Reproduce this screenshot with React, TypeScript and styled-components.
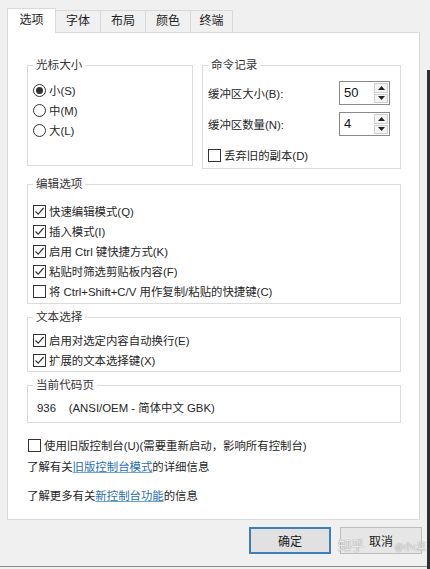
import React from "react";
import styled, { createGlobalStyle } from "styled-components";

const GlobalStyle = createGlobalStyle`
  html, body {
    margin: 0;
    padding: 0;
    background: #f0f0f0;
  }
  body {
    font-family: "Liberation Sans", "Noto Sans CJK SC", sans-serif;
    font-size: 11.4px;
    color: #262626;
  }
  * {
    box-sizing: border-box;
  }
`;

const Window = styled.div`
  position: relative;
  width: 430px;
  height: 569px;
  padding: 8px 9px 0 7px;
  display: flex;
  flex-direction: column;
  background: #f0f0f0;
  overflow: hidden;

  &::after {
    content: "";
    position: absolute;
    top: 70px;
    right: 0;
    bottom: 0;
    width: 3px;
    background: #2e2e2e;
  }

  &::before {
    content: "";
    position: absolute;
    left: 0;
    right: 0;
    bottom: 2px;
    height: 1px;
    background: #8c8c8c;
  }
`;

const TabStrip = styled.div`
  display: flex;
  align-items: flex-start;
  height: 24px;
  padding-left: 1px;
`;

const Tab = styled.div<{ $active?: boolean; $w: number }>`
  width: ${(p) => p.$w}px;
  margin-left: -1px;
  margin-top: ${(p) => (p.$active ? 0 : 2)}px;
  height: ${(p) => (p.$active ? 25 : 22)}px;
  padding-top: ${(p) => (p.$active ? 3 : 2)}px;
  border: 1px solid #d9d9d9;
  border-bottom: none;
  background: ${(p) => (p.$active ? "#ffffff" : "#f0f0f0")};
  position: relative;
  z-index: ${(p) => (p.$active ? 2 : 1)};
  text-align: center;
  line-height: 16px;
  font-size: 12px;
  color: #222;
`;

const Panel = styled.div`
  width: 413px;
  height: 488px;
  background: #ffffff;
  border: 1px solid #d9d9d9;
  padding: 25px 0 0 19px;
  display: flex;
  flex-direction: column;
`;

const TopRow = styled.div`
  display: flex;
  align-items: flex-start;
  gap: 9px;
`;

const Group = styled.fieldset<{ $w: number; $pt: number; $pb: number; $mt?: number }>`
  width: ${(p) => p.$w}px;
  margin: ${(p) => p.$mt ?? 0}px 0 0 0;
  padding: ${(p) => p.$pt}px 5px ${(p) => p.$pb}px 5px;
  border: 1px solid #dcdcdc;
  min-width: 0;
`;

const Legend = styled.legend`
  padding: 0 3px;
  line-height: 14px;
  font-size: 11.6px;
  color: #333;
`;

const OptionRow = styled.div`
  display: flex;
  align-items: center;
  gap: 3px;
  height: 20px;
  white-space: nowrap;
`;

const RadioCircle = styled.span<{ $checked?: boolean }>`
  width: 13px;
  height: 13px;
  border: 1px solid #333;
  border-radius: 50%;
  display: flex;
  align-items: center;
  justify-content: center;
  background: #fff;
  flex-shrink: 0;

  &::after {
    content: "";
    width: 7px;
    height: 7px;
    border-radius: 50%;
    background: ${(p) => (p.$checked ? "#333" : "transparent")};
  }
`;

const CheckBox = styled.span`
  width: 13px;
  height: 13px;
  border: 1px solid #333;
  background: #fff;
  display: flex;
  align-items: center;
  justify-content: center;
  flex-shrink: 0;
`;

const SpinRow = styled.div<{ $mt?: number }>`
  display: flex;
  align-items: center;
  justify-content: space-between;
  height: 24px;
  margin-top: ${(p) => p.$mt ?? 0}px;
  padding-right: 5px;
`;

const SpinBox = styled.div`
  width: 51px;
  height: 24px;
  border: 1px solid #8a8a8a;
  display: flex;
  background: #fff;
`;

const SpinValue = styled.div`
  flex: 1;
  padding-left: 4px;
  line-height: 22px;
  font-size: 13px;
  color: #111;
`;

const SpinButtons = styled.div`
  width: 15px;
  display: flex;
  flex-direction: column;
  gap: 1px;
  padding: 1px 1px 1px 0;
`;

const SpinButton = styled.div`
  flex: 1;
  border: 1px solid #cfcfcf;
  background: #f3f3f3;
  display: flex;
  align-items: center;
  justify-content: center;
`;

const Spacer = styled.div<{ $h: number }>`
  height: ${(p) => p.$h}px;
`;

const CodePage = styled.div`
  height: 20px;
  line-height: 20px;
  padding-left: 4px;
  white-space: nowrap;
`;

const LegacyRow = styled(OptionRow)`
  margin-top: 12px;
  margin-left: 1px;
`;

const InfoLine = styled.div<{ $mt: number }>`
  height: 20px;
  line-height: 20px;
  margin-top: ${(p) => p.$mt}px;
  white-space: nowrap;
`;

const InfoLink = styled.a`
  color: #1f6fb5;
  text-decoration: underline;
  text-decoration-color: #6aa7d8;
  cursor: pointer;
`;

const Footer = styled.div`
  display: flex;
  justify-content: flex-end;
  gap: 9px;
  margin-top: 7px;
  margin-right: -1px;
`;

const DialogButton = styled.button<{ $default?: boolean }>`
  width: 82px;
  height: 27px;
  font-family: "Noto Sans CJK SC", sans-serif;
  font-size: 12px;
  color: #1a1a1a;
  background: ${(p) => (p.$default ? "#e1e1e1" : "#e6e6e6")};
  border: ${(p) => (p.$default ? "2px solid #3d80b8" : "1px solid #bdbdbd")};
  padding: 0;
`;

const Watermark = styled.span<{ $right: number; $size: number }>`
  position: absolute;
  right: ${(p) => p.$right}px;
  bottom: 18px;
  font-family: "Noto Sans CJK SC", sans-serif;
  font-size: ${(p) => p.$size}px;
  line-height: 1;
  color: rgba(255, 255, 255, 0.8);
  text-shadow: 0 0 1px #9a9a9a, 0 0 1px #9a9a9a;
  pointer-events: none;
`;

const Check: React.FC = () => (
  <svg width="11" height="11" viewBox="0 0 11 11">
    <path d="M1.5 5.5 L4.2 8.2 L9.6 2" fill="none" stroke="#333" strokeWidth="1.2" />
  </svg>
);

const Arrow: React.FC<{ up?: boolean }> = ({ up }) => (
  <svg width="7" height="4" viewBox="0 0 7 4">
    <path d={up ? "M0 4 L3.5 0 L7 4 Z" : "M0 0 L3.5 4 L7 0 Z"} fill="#222" />
  </svg>
);

const CheckOption: React.FC<{ checked?: boolean; label: string }> = ({ checked, label }) => (
  <OptionRow>
    <CheckBox>{checked && <Check />}</CheckBox>
    <span>{label}</span>
  </OptionRow>
);

const Spinner: React.FC<{ value: string }> = ({ value }) => (
  <SpinBox>
    <SpinValue>{value}</SpinValue>
    <SpinButtons>
      <SpinButton>
        <Arrow up />
      </SpinButton>
      <SpinButton>
        <Arrow />
      </SpinButton>
    </SpinButtons>
  </SpinBox>
);

const tabs = [
  { label: "选项", w: 49 },
  { label: "字体", w: 46 },
  { label: "布局", w: 46 },
  { label: "颜色", w: 46 },
  { label: "终端", w: 43 },
];

const editOptions = [
  { label: "快速编辑模式(Q)", checked: true },
  { label: "插入模式(I)", checked: true },
  { label: "启用 Ctrl 键快捷方式(K)", checked: true },
  { label: "粘贴时筛选剪贴板内容(F)", checked: true },
  { label: "将 Ctrl+Shift+C/V 用作复制/粘贴的快捷键(C)", checked: false },
];

const App: React.FC = () => {
  return (
    <>
      <GlobalStyle />
      <Window>
        <TabStrip>
          {tabs.map((t, i) => (
            <Tab key={t.label} $w={t.w} $active={i === 0}>
              {t.label}
            </Tab>
          ))}
        </TabStrip>
        <Panel>
          <TopRow>
            <Group $w={166} $pt={8} $pb={25}>
              <Legend>光标大小</Legend>
              <OptionRow>
                <RadioCircle $checked />
                <span>小(S)</span>
              </OptionRow>
              <OptionRow>
                <RadioCircle />
                <span>中(M)</span>
              </OptionRow>
              <OptionRow>
                <RadioCircle />
                <span>大(L)</span>
              </OptionRow>
            </Group>
            <Group $w={199} $pt={9} $pb={3}>
              <Legend>命令记录</Legend>
              <SpinRow>
                <span>缓冲区大小(B):</span>
                <Spinner value="50" />
              </SpinRow>
              <SpinRow $mt={7}>
                <span>缓冲区数量(N):</span>
                <Spinner value="4" />
              </SpinRow>
              <Spacer $h={9} />
              <CheckOption label="丢弃旧的副本(D)" />
            </Group>
          </TopRow>

          <Group $w={374} $pt={10} $pb={2} $mt={8}>
            <Legend>编辑选项</Legend>
            {editOptions.map((o) => (
              <CheckOption key={o.label} label={o.label} checked={o.checked} />
            ))}
          </Group>

          <Group $w={374} $pt={6} $pb={1} $mt={6}>
            <Legend>文本选择</Legend>
            <CheckOption checked label="启用对选定内容自动换行(E)" />
            <CheckOption checked label="扩展的文本选择键(X)" />
          </Group>

          <Group $w={374} $pt={6} $pb={4} $mt={6}>
            <Legend>当前代码页</Legend>
            <CodePage>936&nbsp;&nbsp;&nbsp;&nbsp;(ANSI/OEM - 简体中文 GBK)</CodePage>
          </Group>

          <LegacyRow>
            <CheckBox />
            <span>使用旧版控制台(U)(需要重新启动，影响所有控制台)</span>
          </LegacyRow>
          <InfoLine $mt={2}>
            了解有关<InfoLink>旧版控制台模式</InfoLink>的详细信息
          </InfoLine>
          <InfoLine $mt={9}>
            了解更多有关<InfoLink>新控制台功能</InfoLink>的信息
          </InfoLine>
        </Panel>
        <Footer>
          <DialogButton $default>确定</DialogButton>
          <DialogButton>取消</DialogButton>
        </Footer>
        <Watermark $right={66} $size={13}>知乎</Watermark>
        <Watermark $right={4} $size={9}>@小c菜</Watermark>
      </Window>
    </>
  );
};

export default App;
